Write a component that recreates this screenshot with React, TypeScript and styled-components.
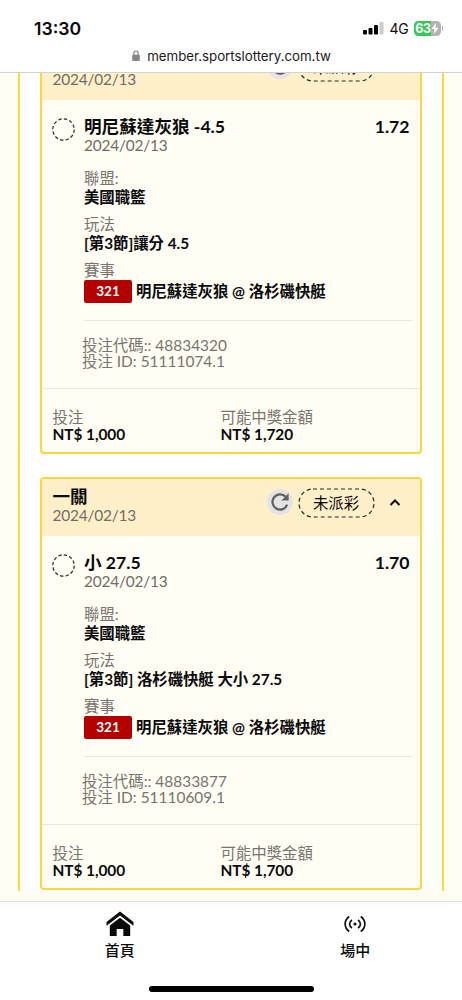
import React from 'react';
import styled, { createGlobalStyle } from 'styled-components';

const GlobalStyle = createGlobalStyle`
  * { box-sizing: border-box; }
  body {
    margin: 0;
    background: #fff;
    color: #0b0b0b;
    font-family: Lato, "Noto Sans CJK TC", sans-serif;
    font-size: 15.4px;
  }
`;

const Screen = styled.div`
  width: 462px;
  height: 1000px;
  display: flex;
  flex-direction: column;
  overflow: hidden;
  background: #fefefe;
`;

const BrowserHeader = styled.header`
  flex: none;
  height: 73px;
  border-bottom: 1px solid #d3d3d5;
  font-family: Inter, sans-serif;
`;

const StatusBar = styled.div`
  display: flex;
  align-items: center;
  height: 46px;
  padding: 10px 19px 0 34px;
`;

const Clock = styled.span`
  flex: 1;
  font-size: 17.6px;
  font-weight: 600;
  letter-spacing: 0;
`;

const Network = styled.span`
  margin: 0 5px 0 5px;
  font-size: 14px;
  letter-spacing: -0.2px;
`;

const Battery = styled.span`
  display: flex;
  align-items: center;
  justify-content: center;
  width: 27px;
  height: 15px;
  border-radius: 4.5px;
  background: linear-gradient(90deg, #36c759 0 63%, #b3b3b3 63%);
  color: #fff;
  font-size: 12.5px;
  font-weight: 700;
  letter-spacing: -0.3px;
`;

const BatteryTip = styled.span`
  width: 1.5px;
  height: 5px;
  margin-left: 1px;
  border-radius: 0 2px 2px 0;
  background: #b3b3b3;
`;

const AddressBar = styled.div`
  display: flex;
  align-items: center;
  justify-content: center;
  gap: 7px;
  height: 20px;
  padding-left: 1px;
  font-size: 13.3px;
  letter-spacing: -0.02px;
  color: #1c1c1e;
`;

const Page = styled.main`
  flex: none;
  height: 828px;
  padding: 0 18px;
  background: #fffdf4;
`;

const TicketList = styled.section`
  display: flex;
  flex-direction: column;
  justify-content: flex-end;
  gap: 23px;
  height: 818px;
  padding: 0 20.5px 1.5px 20px;
  border: solid #ffd83a;
  border-width: 0 2px;
  overflow: hidden;
  background: #fefefe;
`;

const Card = styled.article`
  flex: none;
  height: 413px;
  border: 2px solid #fbd63f;
  border-radius: 4px;
  background: #fffdf4;
`;

const CardHeader = styled.div`
  display: flex;
  align-items: flex-start;
  height: 57px;
  padding: 8px 19px 0 10.5px;
  background: #fff0c9;
`;

const HeaderText = styled.div`
  flex: 1;
`;

const Title = styled.div`
  font-size: 17.6px;
  font-weight: 700;
  line-height: 20px;
`;

const DateText = styled.div`
  line-height: 17px;
  letter-spacing: -0.17px;
  color: #706d66;
`;

const RefreshButton = styled.span`
  display: grid;
  place-items: center;
  width: 26px;
  height: 26px;
  margin-top: 2px;
  border-radius: 50%;
  background: #e4e4e4;
`;

const Status = styled.span`
  position: relative;
  display: grid;
  place-items: center;
  width: 77px;
  height: 30px;
  margin: 1px 14px 0 5px;
  line-height: 28px;
`;

const StatusOutline = styled.svg`
  position: absolute;
  inset: 0;
`;

const Chevron = styled.svg`
  margin-top: 11px;
`;

const Leg = styled.div`
  display: flex;
  align-items: flex-start;
  padding: 17px 7.5px 0 10px;
`;

const PendingMark = styled.svg`
  flex: none;
  margin-right: 8px;
`;

const LegBody = styled.div`
  flex: 1;
`;

const LegTop = styled.div`
  display: flex;
  justify-content: space-between;
  padding-right: 2.5px;
  margin-bottom: 15px;
`;

const Field = styled.div`
  height: 46px;
`;

const Label = styled.div`
  line-height: 18px;
  color: #78756e;
`;

const Value = styled.div`
  line-height: 21px;
  font-weight: 700;
  letter-spacing: -0.03px;
  white-space: nowrap;
`;

const Match = styled.div`
  display: flex;
  align-items: center;
  gap: 4px;
  height: 26px;
  font-weight: 700;
  line-height: 20px;
  padding-bottom: 1px;
  white-space: nowrap;
`;

const MatchNumber = styled.span`
  display: grid;
  place-items: center;
  width: 48px;
  height: 23px;
  border-radius: 2px;
  background: #b50000;
  color: #fff;
  font-size: 13.5px;
`;

const Codes = styled.div`
  height: 68px;
  margin-top: 15px;
  padding-top: 16px;
  border-top: 1.5px solid #e9e7e0;
  line-height: 16.5px;
  color: #78756e;

  div {
    margin-left: -2px;
    letter-spacing: 0.02px;
  }
`;

const Stakes = styled.div`
  display: flex;
  padding: 20px 0 0 10.5px;
  border-top: 1.5px solid #e9e7e0;
`;

const Stake = styled.div`
  width: 168px;
  line-height: 17px;

  span {
    display: block;
    color: #78756e;
  }

  strong {
    display: block;
    letter-spacing: -0.05px;
  }
`;

const BottomBar = styled.footer`
  flex: 1;
  display: flex;
  flex-direction: column;
  align-items: center;
  border-top: 1px solid #e2e1de;
  background: #fefefe;
`;

const Tabs = styled.nav`
  flex: none;
  align-self: flex-start;
  display: flex;
  width: 471px;
  height: 84px;
  margin-left: 2px;
`;

const Tab = styled.div`
  flex: 1;
  display: flex;
  flex-direction: column;
  align-items: center;
  font-size: 15px;
  font-weight: 500;
  line-height: 20px;

  svg {
    margin: 8px 0 4px;
  }
`;

const HomeIndicator = styled.div`
  width: 165px;
  height: 6px;
  border-radius: 3px;
  background: #000;
`;

type Ticket = {
  pick: string;
  odds: string;
  play: string;
  code: string;
  id: string;
  payout: string;
};

const tickets: Ticket[] = [
  { pick: '明尼蘇達灰狼 -4.5', odds: '1.72', play: '[第3節]讓分 4.5', code: '48834320', id: '51111074.1', payout: 'NT$ 1,720' },
  { pick: '小 27.5', odds: '1.70', play: '[第3節] 洛杉磯快艇 大小 27.5', code: '48833877', id: '51110609.1', payout: 'NT$ 1,700' },
];

function TicketCard({ pick, odds, play, code, id, payout }: Ticket) {
  return (
    <Card>
      <CardHeader>
        <HeaderText>
          <Title>一關</Title>
          <DateText>2024/02/13</DateText>
        </HeaderText>
        <RefreshButton>
          <svg width="20" height="20" viewBox="0 0 20 20" fill="none">
            <path d="M15.7 4.8A7.6 7.6 0 1 0 17.2 12.6" stroke="#626262" strokeWidth="2.3" />
            <path d="M18.6 1.2V8.4H11.4Z" fill="#626262" />
          </svg>
        </RefreshButton>
        <Status>
          <StatusOutline width="77" height="30" viewBox="0 0 77 30" fill="none">
            <rect x="1" y="1" width="75" height="28" rx="14" stroke="#262521" strokeWidth="1.2" strokeDasharray="4 3" />
          </StatusOutline>
          未派彩
        </Status>
        <Chevron width="12" height="9" viewBox="0 0 12 9" fill="none">
          <path d="M1.5 7L6 2.5L10.5 7" stroke="#111" strokeWidth="2" />
        </Chevron>
      </CardHeader>
      <Leg>
        <PendingMark width="24" height="25" viewBox="0 0 24 25" fill="none">
          <circle cx="11.5" cy="12.5" r="10.7" stroke="#2a2925" strokeWidth="1.2" strokeDasharray="3.4 2.2" />
        </PendingMark>
        <LegBody>
          <LegTop>
            <div>
              <Title>{pick}</Title>
              <DateText>2024/02/13</DateText>
            </div>
            <Title>{odds}</Title>
          </LegTop>
          <Field>
            <Label>聯盟:</Label>
            <Value>美國職籃</Value>
          </Field>
          <Field>
            <Label>玩法</Label>
            <Value>{play}</Value>
          </Field>
          <Label>賽事</Label>
          <Match>
            <MatchNumber>321</MatchNumber>
            明尼蘇達灰狼 @ 洛杉磯快艇
          </Match>
          <Codes>
            <div>投注代碼:: {code}</div>
            <div>投注 ID: {id}</div>
          </Codes>
        </LegBody>
      </Leg>
      <Stakes>
        <Stake>
          <span>投注</span>
          <strong>NT$ 1,000</strong>
        </Stake>
        <Stake>
          <span>可能中獎金額</span>
          <strong>{payout}</strong>
        </Stake>
      </Stakes>
    </Card>
  );
}

export default function App() {
  return (
    <Screen>
      <GlobalStyle />
      <BrowserHeader>
        <StatusBar>
          <Clock>13:30</Clock>
          <svg width="21" height="14" viewBox="0 0 21 14">
            <rect x="0" y="9" width="4" height="4.5" rx="1" fill="#000" />
            <rect x="5.5" y="7" width="4" height="6.5" rx="1" fill="#000" />
            <rect x="11" y="4" width="4" height="9.5" rx="1" fill="#000" />
            <rect x="16.5" y="1" width="4" height="12.5" rx="1" fill="#ccc" />
          </svg>
          <Network>4G</Network>
          <Battery>
            63
            <svg width="8" height="11" viewBox="0 0 8 11">
              <path d="M5 0L0.5 6H3.5L2.8 11L7.6 4.7H4.5Z" fill="#fff" />
            </svg>
          </Battery>
          <BatteryTip />
        </StatusBar>
        <AddressBar>
          <svg width="8" height="12" viewBox="0 0 8 12" fill="none">
            <path d="M1.8 5V3.2a2.2 2.2 0 0 1 4.4 0V5" stroke="#858588" strokeWidth="1.2" />
            <rect x="0.2" y="4.8" width="7.6" height="6.2" rx="1.2" fill="#858588" />
          </svg>
          member.sportslottery.com.tw
        </AddressBar>
      </BrowserHeader>
      <Page>
        <TicketList>
          {tickets.map((ticket) => (
            <TicketCard key={ticket.id} {...ticket} />
          ))}
        </TicketList>
      </Page>
      <BottomBar>
        <Tabs>
          <Tab>
            <svg width="28" height="26" viewBox="0 0 28 26">
              <path d="M14 1.5L27.5 12V15.7L14 5.4L0.5 15.7V12Z" fill="#0a0a0a" />
              <path d="M14 7.7L24.2 15.4V26H17.3V19H10.7V26H3.8V15.4Z" fill="#0a0a0a" />
            </svg>
            首頁
          </Tab>
          <Tab>
            <svg width="22" height="26" viewBox="0 0 22 26" fill="none" stroke="#111" strokeWidth="1.7">
              <path d="M5.2 6.5C-0.2 10.5 -0.2 17.5 5.2 21.5M16.8 6.5C22.2 10.5 22.2 17.5 16.8 21.5" />
              <path d="M8 10C4.8 12 4.8 16 8 18M14 10C17.2 12 17.2 16 14 18" />
              <circle cx="11" cy="14" r="1.6" fill="#111" stroke="none" />
            </svg>
            場中
          </Tab>
        </Tabs>
        <HomeIndicator />
      </BottomBar>
    </Screen>
  );
}
